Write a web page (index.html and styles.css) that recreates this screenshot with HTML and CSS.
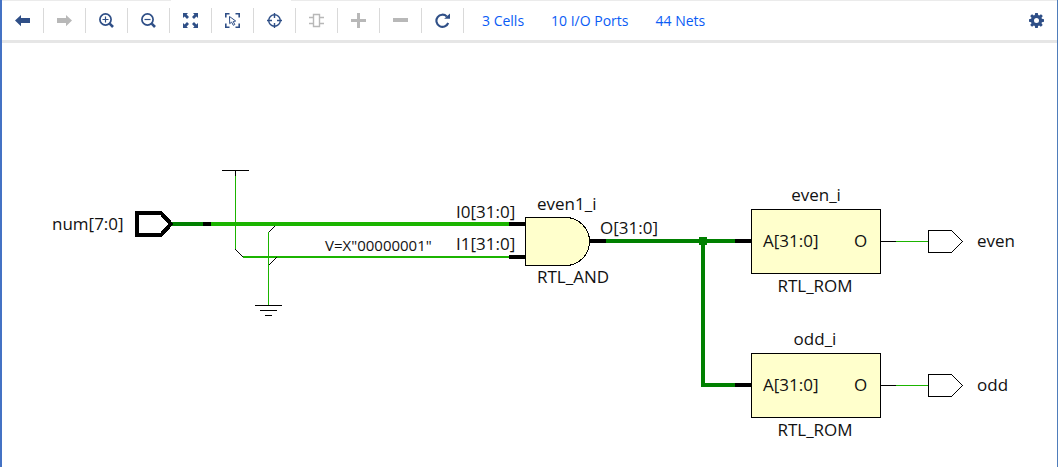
FILE: index.html
```html
<!DOCTYPE html>
<html lang="en">
<head>
<meta charset="utf-8">
<title>Schematic</title>
<link rel="stylesheet" href="styles.css">
</head>
<body>
<div class="panel">
  <header class="toolbar">
    <div class="tools">
      <button class="tool" aria-label="Back"><svg class="icon" viewBox="0 0 15 15"><path d="M0 7.5 6 2v3h9v5H6v3.2z"/></svg></button>
      <button class="tool" aria-label="Forward" disabled><svg class="icon" viewBox="0 0 15 15"><path d="M15 7.5 9 2v3H0v5h9v3.2z"/></svg></button>
      <button class="tool" aria-label="Zoom in"><svg class="icon" viewBox="0 0 15 15"><g class="line"><circle cx="6.5" cy="6.5" r="5.6" stroke-width="1.7"/><path d="M3.5 6.5h6M6.5 3.5v6" stroke-width="1.2"/><path d="m10.7 10.7 3.3 3.3" stroke-width="2.6"/></g></svg></button>
      <button class="tool" aria-label="Zoom out"><svg class="icon" viewBox="0 0 15 15"><g class="line"><circle cx="6.5" cy="6.5" r="5.6" stroke-width="1.7"/><path d="M3.5 6.5h6" stroke-width="1.2"/><path d="m10.7 10.7 3.3 3.3" stroke-width="2.6"/></g></svg></button>
      <button class="tool" aria-label="Zoom fit"><svg class="icon" viewBox="0 0 15 15"><path d="M0 0h5L3.6 1.6 6 4 4 6 1.6 3.6 0 5zM15 0h-5l1.4 1.6L9 4l2 2 2.4-2.4L15 5zM0 15h5l-1.4-1.6L6 11 4 9l-2.4 2.4L0 10zM15 15h-5l1.4-1.6L9 11l2-2 2.4 2.4L15 10z"/></svg></button>
      <button class="tool" aria-label="Fit selection"><svg class="icon" viewBox="0 0 15 15"><g class="line"><path d="M.8 4.5V.8h3.7M10.5.8h3.7v3.7M.8 10.5v3.7h3.7M14.2 10.5v3.7h-3.7" stroke-width="1.6"/><path d="m4.5 3.5.2 7.2 1.9-1.6 1.7 3.2 1.5-.8-1.6-3 2.5-.5z" stroke-width="1"/></g></svg></button>
      <button class="tool" aria-label="Center selection"><svg class="icon" viewBox="0 0 15 15"><g class="line" stroke-width="1.4"><circle cx="7.5" cy="7.5" r="5.8"/><path d="M7.5 0v5M7.5 10v5M0 7.5h5M10 7.5h5"/></g></svg></button>
      <button class="tool" aria-label="Expand cell" disabled><svg class="icon" viewBox="0 0 15 15"><g class="line"><path d="M4.5 1.5h6v12h-6z" stroke-width="1.4"/><path d="M0 4.5h4M0 10.5h4M11 4.5h4M11 10.5h4" stroke-width="1.6"/></g></svg></button>
      <button class="tool" aria-label="Add" disabled><svg class="icon" viewBox="0 0 15 15"><path d="M6 0h3v6h6v3H9v6H6V9H0V6h6z"/></svg></button>
      <button class="tool" aria-label="Remove" disabled><svg class="icon" viewBox="0 0 15 15"><path d="M0 5h15v4H0z"/></svg></button>
      <button class="tool" aria-label="Refresh"><svg class="icon" viewBox="0 0 15 15"><path class="line" d="M11.8 3.4A6.1 6.1 0 1 0 13.2 10" stroke-width="2.1"/><path d="M15 .5v5.3H9.2z"/></svg></button>
    </div>
    <nav class="stats">
      <a href="#cells">3 Cells</a>
      <a href="#ports">10 I/O Ports</a>
      <a href="#nets">44 Nets</a>
    </nav>
    <button class="settings" aria-label="Settings"><svg class="icon" viewBox="0 0 15 15"><path fill-rule="evenodd" d="M6.2 0h2.6l.4 2.1 1 .4L12 1.3 13.8 3l-1.3 1.8.4 1 2.1.4v2.6l-2.1.4-.4 1 1.2 1.8-1.8 1.8-1.8-1.3-1 .4-.3 2.1H6.2l-.4-2.1-1-.4L3 13.8 1.2 12l1.3-1.8-.4-1L0 8.8V6.2l2.1-.4.4-1L1.2 3 3 1.2l1.8 1.3 1-.4zM7.5 5a2.5 2.5 0 1 0 0 5 2.5 2.5 0 0 0 0-5z"/></svg></button>
  </header>
  <main class="canvas">
    <svg class="schematic" viewBox="2 43 1055 424" role="img" aria-label="RTL schematic">
      <g class="net">
        <path d="M235.5 176v74M268.5 232v73M896 241.5h32M896 385.5h32"/>
        <path class="w2" d="M243 257h266"/>
        <path class="w4" d="M211 224h298"/>
      </g>
      <g class="net selected">
        <path class="w4" d="M172 224h31M606 241h129M703 241v146M701 385h34"/>
        <path class="dot" d="M699 237h8v8h-8z"/>
      </g>
      <g class="pin">
        <path class="w4" d="M203 224h8M509 224h16M509 257h16M590 241h16M735 241h16M735 385h16"/>
        <path d="M222 170.5h27M235.5 171v5M255 305.5h27M260 310.5h17M265 315.5h7M881 241.5h15M881 385.5h15"/>
        <path d="M235.5 249.5l8 8M268.5 232.5l6-6M268.5 265.5l8-8"/>
        <path class="w4" d="M137 213h24l10 11-10 11h-24z"/>
        <path d="M928.5 230.5h23l11 11-11 11h-23zM928.5 374.5h23l11 11-11 11h-23z"/>
      </g>
      <g class="cell">
        <path d="M525.5 217.5h40a24 24 0 0 1 0 48h-40z"/>
        <path d="M751.5 209.5h129v64h-129zM751.5 353.5h129v64h-129z"/>
      </g>
      <g class="label">
        <text x="52" y="230">num[7:0]</text>
        <text x="456" y="218">I0[31:0]</text>
        <text x="456" y="250">I1[31:0]</text>
        <text class="value" x="325" y="251">V=X"00000001"</text>
        <text x="537" y="210">even1_i</text>
        <text x="537" y="283">RTL_AND</text>
        <text x="600" y="234">O[31:0]</text>
        <text class="mid" x="816" y="201">even_i</text>
        <text x="763" y="247">A[31:0]</text>
        <text x="854" y="247">O</text>
        <text class="mid" x="815" y="292">RTL_ROM</text>
        <text class="mid" x="815" y="345">odd_i</text>
        <text x="763" y="391">A[31:0]</text>
        <text x="854" y="391">O</text>
        <text class="mid" x="815" y="436">RTL_ROM</text>
        <text x="977" y="247">even</text>
        <text x="977" y="391">odd</text>
      </g>
    </svg>
  </main>
</div>
</body>
</html>
```
FILE: styles.css
```css
* { box-sizing: border-box; }
body {
  margin: 0;
  background: #fff;
  font-family: "Open Sans", "Noto Sans", sans-serif;
}
.panel {
  display: flex;
  flex-direction: column;
  min-height: 100vh;
  border-left: 2px solid #4472c4;
  border-right: 1px solid #4f7dbb;
  overflow: hidden;
}
.toolbar {
  display: flex;
  align-items: center;
  height: 43px;
  padding-top: 1px;
  border-bottom: 3px solid #e6e6e6;
  background: linear-gradient(to right, #ebebeb 169px, #fff 169px 289px, #ebebeb 289px) top / 100% 1px no-repeat;
}
.tools { display: flex; }
.tool, .settings {
  display: flex;
  align-items: center;
  justify-content: center;
  width: 42px;
  height: 25px;
  padding: 0;
  border: 0;
  background: none;
  color: #2f4f87;
}
.tool { border-right: 1px solid #d9d9d9; }
.tool:disabled { color: #b8b8b8; }
.icon {
  width: 15px;
  height: 15px;
  fill: currentColor;
}
.icon .line {
  fill: none;
  stroke: currentColor;
}
.stats {
  display: flex;
  gap: 27px;
  margin-left: 18px;
}
.stats a {
  color: #0a5cf5;
  font-size: 14px;
  line-height: 20px;
  text-decoration: none;
}
.settings { margin-left: auto; }
.canvas { flex: 1; }
.schematic {
  display: block;
  width: 100%;
  height: auto;
}
.net, .pin, .cell {
  fill: none;
  stroke-width: 1;
  shape-rendering: crispEdges;
}
.net { stroke: #1bb400; }
.selected { stroke: #008000; }
.dot {
  fill: #008000;
  stroke: none;
}
.pin, .cell { stroke: #000; }
.cell { fill: #ffffcc; }
.w2 { stroke-width: 2; }
.w4 { stroke-width: 4; }
.label {
  fill: #111;
  font-size: 17px;
}
.value { font-size: 15px; }
.mid { text-anchor: middle; }
```
